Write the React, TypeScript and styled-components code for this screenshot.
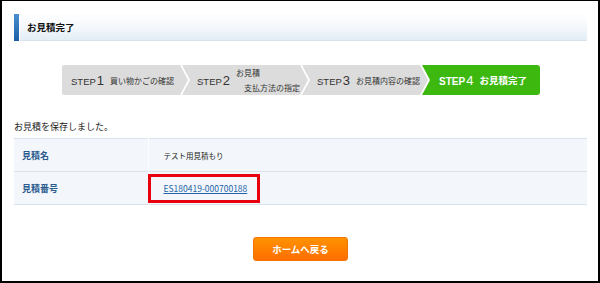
import React from 'react';
import styled, { createGlobalStyle } from 'styled-components';

const GlobalStyle = createGlobalStyle`
  html, body {
    margin: 0;
    padding: 0;
    background: #fff;
  }
  body {
    font-family: "Noto Sans CJK JP", "Liberation Sans", sans-serif;
    color: #222;
  }
`;

const Frame = styled.div`
  box-sizing: border-box;
  width: 600px;
  height: 283px;
  border-style: solid;
  border-color: #000;
  border-width: 1px 2px 2px 2px;
  padding: 13px 11px 0 12px;
  overflow: hidden;
`;

const Header = styled.div`
  display: flex;
  height: 27px;
`;

const Accent = styled.div`
  width: 5px;
  margin-right: 1px;
  background: linear-gradient(#4a8fd0, #1b5ea5);
`;

const HeaderBar = styled.div`
  flex: 1;
  display: flex;
  align-items: center;
  padding-left: 7px;
  box-sizing: border-box;
  background: linear-gradient(#fdfeff 0%, #f6f9fc 45%, #e3edf5 100%);
  border-bottom: 1px solid #d6e4ef;
`;

const Title = styled.h1`
  margin: 0;
  font-size: 9.5px;
  font-weight: 700;
  color: #111;
`;

const Steps = styled.div`
  display: flex;
  width: 478px;
  height: 30px;
  margin: 24px 0 0 48px;
`;

const Step = styled.div<{ $first?: boolean; $last?: boolean; $w: number }>`
  flex: none;
  width: ${(p) => p.$w}px;
  height: 100%;
  display: flex;
  align-items: center;
  justify-content: ${(p) => (p.$last ? 'center' : 'flex-start')};
  box-sizing: border-box;
  padding-left: ${(p) => (p.$first ? 9 : p.$last ? 4 : 15)}px;
  margin-left: ${(p) => (p.$first ? 0 : -6)}px;
  background: ${(p) => (p.$last ? '#3db80f' : '#dcdcdc')};
  color: ${(p) => (p.$last ? '#fff' : '#333')};
  font-weight: ${(p) => (p.$last ? 700 : 400)};
  border-radius: ${(p) => (p.$last ? '0 3px 3px 0' : p.$first ? '2px 0 0 2px' : '0')};
  clip-path: ${(p) =>
    p.$first
      ? 'polygon(0 0, calc(100% - 8px) 0, 100% 50%, calc(100% - 8px) 100%, 0 100%)'
      : p.$last
      ? 'polygon(0 0, 100% 0, 100% 100%, 0 100%, 8px 50%)'
      : 'polygon(0 0, calc(100% - 8px) 0, 100% 50%, calc(100% - 8px) 100%, 0 100%, 8px 50%)'};
`;

const StepNo = styled.span<{ $big?: boolean }>`
  font-family: "Liberation Sans", "Noto Sans CJK JP", sans-serif;
  font-size: ${(p) => (p.$big ? 10 : 9.5)}px;
  white-space: nowrap;
  margin-right: 6px;

  b {
    font-size: 13px;
    font-weight: 400;
    margin-left: 1px;
  }
`;

const StepLabel = styled.span<{ $big?: boolean }>`
  font-size: ${(p) => (p.$big ? 9.5 : 8)}px;
  white-space: nowrap;
`;

const TwoLine = styled.span`
  display: flex;
  flex-direction: column;
  font-size: 8px;
  line-height: 15px;
  margin-top: -1px;

  span + span {
    margin-left: 8px;
  }
`;

const Message = styled.p`
  margin: 25px 0 0 0;
  height: 14px;
  line-height: 14px;
  font-size: 9px;
  color: #222;
`;

const Table = styled.table`
  width: 100%;
  margin-top: 4px;
  border-collapse: collapse;
  background: #f3f7fb;
`;

const Row = styled.tr`
  border-top: 1px solid #dbe3ea;
  border-bottom: 1px solid #dbe3ea;
  height: 33px;
`;

const Label = styled.th`
  width: 134px;
  box-sizing: border-box;
  padding: 0 0 0 8px;
  text-align: left;
  font-size: 9px;
  font-weight: 700;
  color: #2b5b8e;
`;

const Value = styled.td`
  padding: 0 0 0 15px;
  border-left: 1px solid #fbfdff;
  font-size: 7.5px;
  color: #222;
`;

const Highlight = styled.span`
  display: inline-block;
  box-sizing: border-box;
  height: 29px;
  margin-left: -16px;
  padding: 0 10px 0 13px;
  border: 3px solid #e8000f;
  line-height: 23px;
`;

const NumberLink = styled.a`
  font-size: 8.5px;
  color: #2463a8;
  text-decoration: underline;
`;

const ButtonRow = styled.div`
  display: flex;
  justify-content: center;
  margin-top: 32px;
`;

const HomeButton = styled.button`
  width: 95px;
  height: 24px;
  border: 1px solid #f27400;
  border-radius: 3px;
  background: linear-gradient(#ff9200, #ff6e00);
  color: #fff;
  font-family: "Noto Sans CJK JP", sans-serif;
  font-size: 9.5px;
  font-weight: 700;
  padding: 0;
`;

export default function App(): React.ReactElement {
  return (
    <>
      <GlobalStyle />
      <Frame>
        <Header>
          <Accent />
          <HeaderBar>
            <Title>お見積完了</Title>
          </HeaderBar>
        </Header>

        <Steps>
          <Step $first $w={126}>
            <StepNo>
              STEP<b>1</b>
            </StepNo>
            <StepLabel>買い物かごの確認</StepLabel>
          </Step>
          <Step $w={126}>
            <StepNo>
              STEP<b>2</b>
            </StepNo>
            <TwoLine>
              <span>お見積</span>
              <span>支払方法の指定</span>
            </TwoLine>
          </Step>
          <Step $w={126}>
            <StepNo>
              STEP<b>3</b>
            </StepNo>
            <StepLabel>お見積内容の確認</StepLabel>
          </Step>
          <Step $last $w={118}>
            <StepNo $big>
              STEP<b>4</b>
            </StepNo>
            <StepLabel $big>お見積完了</StepLabel>
          </Step>
        </Steps>

        <Message>お見積を保存しました。</Message>

        <Table>
          <tbody>
            <Row>
              <Label>見積名</Label>
              <Value>テスト用見積もり</Value>
            </Row>
            <Row>
              <Label>見積番号</Label>
              <Value>
                <Highlight>
                  <NumberLink href="#">ES180419-000700188</NumberLink>
                </Highlight>
              </Value>
            </Row>
          </tbody>
        </Table>

        <ButtonRow>
          <HomeButton>ホームへ戻る</HomeButton>
        </ButtonRow>
      </Frame>
    </>
  );
}
